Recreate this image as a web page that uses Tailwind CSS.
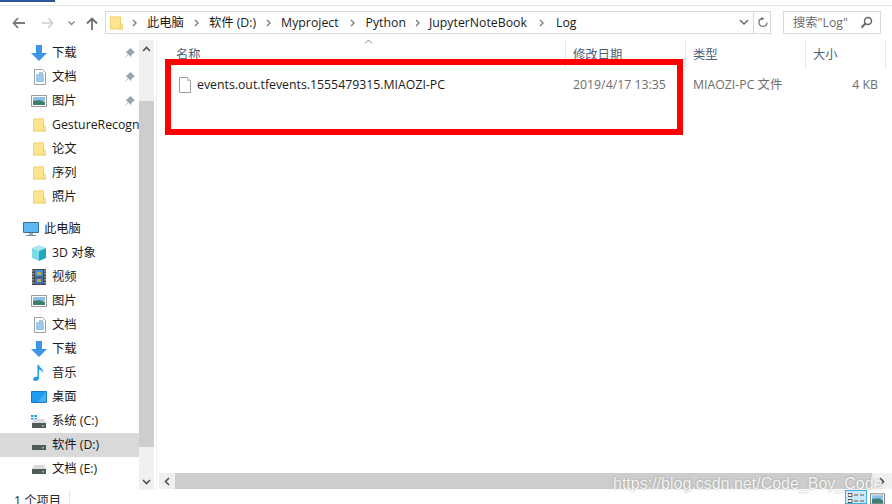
<!DOCTYPE html>
<html><head><meta charset="utf-8">
<script src="https://cdn.jsdelivr.net/npm/@tailwindcss/browser@4"></script>
</head>
<body class="overflow-hidden bg-white">
<svg width="0" height="0" class="absolute">
<defs>
<symbol id="folder" viewBox="0 0 16 16"><path d="M.5.5h12.500v15H.5z" fill="#ffe48f" stroke="#eec95a"/><path d="M12.500 15.500v-6h3v6z" fill="#ffe9a8" stroke="#eec95a"/></symbol>
<symbol id="down" viewBox="0 0 16 16"><path d="M5 0h6v8h5l-8 8-8-8h5z" fill="#3f95e6"/></symbol>
<symbol id="doc" viewBox="0 0 14 16"><path d="M1.500.5h8l3 3v12h-11z" fill="#fff" stroke="#9aa0a6"/><path d="M6 4h4M3 6h8M3 8h8M3 10h8M3 12h8" stroke="#3f95d0"/></symbol>
<symbol id="pic" viewBox="0 0 16 12"><path d="M.5.500h15v11H.5z" fill="#fff" stroke="#9a9a9a"/><path d="M2 2h12v4H2z" fill="#8cc0ea"/><path d="M2 6c4-1 8-1 12 1v3H2z" fill="#3f7f72"/></symbol>
<symbol id="pin" viewBox="0 0 10 10"><path d="M5.500 0l4.500 4.500-1.500.5-2 2-.5 2L3.500 6.500.5 9.500 0 9.500l3-3.500L.5 3.500l2-.5 2-2z" fill="#9aa3ad"/></symbol>
<symbol id="drive" viewBox="0 0 14 9"><path d="M2 0h10l2 4H0z" fill="#d8dadb"/><path d="M0 4h14v5H0z" fill="#53585c"/><path d="M10 6h2v1.500h-2z" fill="#5fe05f"/></symbol>
<symbol id="chev" viewBox="0 0 5 8"><path d="M1 1l3 3-3 3" fill="none" stroke="#777" stroke-width="1.300"/></symbol>
</defs>
</svg>

<div class="relative flex h-[504px] w-[892px] flex-col overflow-hidden font-['Open_Sans','Noto_Sans_CJK_SC',sans-serif] text-[12.3px] leading-[16px] text-[#1a1a1a]">
  <div class="h-[2px] w-[55px] shrink-0 bg-[#2b5797]"></div>
  <div class="mt-[3px] h-px shrink-0 bg-[#e3e3e3]"></div>

  <div class="flex h-[34px] shrink-0 items-center pl-[12px]">
    <svg width="13" height="12" viewBox="0 0 13 12" class="mr-[17px] shrink-0"><path d="M6 1L1.500 6 6 11M2 6h11" fill="none" stroke="#7a7a7a" stroke-width="1.800"/></svg>
    <svg width="12" height="12" viewBox="0 0 13 12" class="mr-[14px] shrink-0"><path d="M7 1l4.500 5L7 11M11 6H0" fill="none" stroke="#cfcfcf" stroke-width="1.800"/></svg>
    <svg width="7" height="5" viewBox="0 0 7 5" class="mr-[11px] shrink-0"><path d="M.5.500l3 3 3-3" fill="none" stroke="#8a8a8a" stroke-width="1.400"/></svg>
    <svg width="12" height="13" viewBox="0 0 12 13" class="mr-[7px] shrink-0"><path d="M1 6.500l5-5 5 5M6 2v11" fill="none" stroke="#6e6e6e" stroke-width="1.800"/></svg>
    <div class="mb-[1px] flex h-[23px] w-[666px] shrink-0 items-center border border-[#d9d9d9] pl-[4px]">
      <svg width="13" height="16" class="mr-[9px] shrink-0"><use href="#folder"/></svg>
      <svg width="5" height="8" class="mr-[10px] shrink-0"><use href="#chev"/></svg>
      <span>此电脑</span>
      <svg width="5" height="8" class="mx-[10px] shrink-0"><use href="#chev"/></svg>
      <span>软件 (D:)</span>
      <svg width="5" height="8" class="mx-[10px] shrink-0"><use href="#chev"/></svg>
      <span>Myproject</span>
      <svg width="5" height="8" class="mx-[11px] shrink-0"><use href="#chev"/></svg>
      <span>Python</span>
      <svg width="5" height="8" class="mx-[9px] shrink-0"><use href="#chev"/></svg>
      <span>JupyterNoteBook</span>
      <svg width="5" height="8" class="mx-[12px] shrink-0"><use href="#chev"/></svg>
      <span>Log</span>
      <div class="ml-auto flex h-full w-[18px] items-center justify-center">
        <svg width="10" height="7" viewBox="0 0 10 7"><path d="M1 1l4 4 4-4" fill="none" stroke="#666" stroke-width="1.500"/></svg>
      </div>
      <div class="flex h-full w-[17px] items-center justify-center border-l border-[#d9d9d9]">
        <svg width="11" height="12" viewBox="0 0 11 12"><path d="M6 1.500h-1a4 4 0 1 0 5 4" fill="none" stroke="#777" stroke-width="1.300"/><path d="M4.500 0l3 1.700-3 1.700z" fill="#777"/></svg>
      </div>
    </div>
    <div class="mb-[1px] ml-[12px] flex h-[23px] w-[98px] shrink-0 items-center justify-between border border-[#d9d9d9] pl-[9px] pr-[7px] text-[#6d6d6d]">
      <span>搜索"Log"</span>
      <svg width="13" height="13" viewBox="0 0 13 13"><circle cx="8" cy="5" r="3.500" fill="none" stroke="#666" stroke-width="1.500"/><path d="M5.500 7.500L1.500 11.500" stroke="#666" stroke-width="2"/></svg>
    </div>
  </div>

  <div class="flex min-h-0 flex-1">
    <div class="flex w-[139px] shrink-0 flex-col pt-[1px]">
      <div class="flex h-[24px] items-center pl-[31px]"><svg width="16" height="16" class="mr-[5px] shrink-0"><use href="#down"/></svg><span>下载</span><svg width="10" height="10" class="ml-auto mr-[4px]"><use href="#pin"/></svg></div>
      <div class="flex h-[24px] items-center pl-[33px]"><svg width="14" height="16" class="mr-[5px] shrink-0"><use href="#doc"/></svg><span>文档</span><svg width="10" height="10" class="ml-auto mr-[4px]"><use href="#pin"/></svg></div>
      <div class="flex h-[24px] items-center pl-[31px]"><svg width="16" height="12" class="mr-[5px] shrink-0"><use href="#pic"/></svg><span>图片</span><svg width="10" height="10" class="ml-auto mr-[4px]"><use href="#pin"/></svg></div>
      <div class="flex h-[24px] items-center pl-[33px]"><svg width="13" height="16" class="mr-[6px] shrink-0"><use href="#folder"/></svg><span class="overflow-hidden whitespace-nowrap">GestureRecogni</span></div>
      <div class="flex h-[24px] items-center pl-[33px]"><svg width="13" height="16" class="mr-[6px] shrink-0"><use href="#folder"/></svg><span>论文</span></div>
      <div class="flex h-[24px] items-center pl-[33px]"><svg width="13" height="16" class="mr-[6px] shrink-0"><use href="#folder"/></svg><span>序列</span></div>
      <div class="flex h-[24px] items-center pl-[33px]"><svg width="13" height="16" class="mr-[6px] shrink-0"><use href="#folder"/></svg><span>照片</span></div>
      <div class="mt-[8px] flex h-[24px] items-center pl-[23px]">
        <svg width="16" height="15" viewBox="0 0 16 15" class="mr-[5px] shrink-0"><path d="M.5.500h15v10H.5z" fill="#5cb8f5" stroke="#3d6f96"/><path d="M6 11h4v2H6z" fill="#9ab0c0"/><path d="M3 13.500h10" stroke="#6f8ca3"/></svg><span>此电脑</span>
      </div>
      <div class="flex h-[24px] items-center pl-[31px]">
        <svg width="16" height="16" viewBox="0 0 16 16" class="mr-[5px] shrink-0"><path d="M8 0l7 3-7 3-7-3z" fill="#a9e8f2"/><path d="M1 3l7 3v10l-7-3z" fill="#7ddbe6"/><path d="M15 3L8 6v10l7-3z" fill="#1fa8c4"/></svg><span>3D 对象</span>
      </div>
      <div class="flex h-[24px] items-center pl-[32px]">
        <svg width="14" height="16" viewBox="0 0 14 16" class="mr-[6px] shrink-0"><path d="M0 0h14v16H0z" fill="#4a4a4a"/><path d="M3 1h8v6.500H3z" fill="#3f8fe0"/><path d="M3 8.500h8V15H3z" fill="#3f6fc0"/><path d="M5 3h4v3H5zM5 10h4v3H5z" fill="#b9b040"/><path d="M1 1v14M13 1v14" stroke="#ddd" stroke-dasharray="1.500 1.500"/></svg><span>视频</span>
      </div>
      <div class="flex h-[24px] items-center pl-[31px]"><svg width="16" height="12" class="mr-[5px] shrink-0"><use href="#pic"/></svg><span>图片</span></div>
      <div class="flex h-[24px] items-center pl-[33px]"><svg width="14" height="16" class="mr-[5px] shrink-0"><use href="#doc"/></svg><span>文档</span></div>
      <div class="flex h-[24px] items-center pl-[31px]"><svg width="16" height="16" class="mr-[5px] shrink-0"><use href="#down"/></svg><span>下载</span></div>
      <div class="flex h-[24px] items-center pl-[33px]">
        <svg width="12" height="16" viewBox="0 0 12 16" class="mr-[7px] shrink-0"><path d="M4.500 0h1.500c.5 3 5 4 4 8-.5-2-2-3-4-3.500V13c0 2-2 3-4 3s-2.500-2-1-3.500c1-1 2.500-1 3.500-.5z" fill="#1e9be8"/></svg><span>音乐</span>
      </div>
      <div class="flex h-[24px] items-center pl-[31px]">
        <svg width="16" height="12" viewBox="0 0 16 12" class="mr-[5px] shrink-0"><path d="M.5.500h15v11H.5z" fill="#1f9bf0" stroke="#1877c0"/><path d="M15 1L7 11h8z" fill="#4ab0f5"/></svg><span>桌面</span>
      </div>
      <div class="flex h-[24px] items-center pl-[31px]">
        <svg width="16" height="13" viewBox="0 0 16 13" class="mr-[5px] shrink-0"><path d="M0 0h2.500v2H0zM3.500 0H6v2H3.500zM0 3h2.500v1.500H0zM3.500 3H6v1.500H3.500z" fill="#1e9be8"/><path d="M3 4h10l2 4H1z" fill="#d8dadb"/><path d="M1 8h14v5H1z" fill="#53585c"/><path d="M11 10h2v1.500h-2z" fill="#5fe05f"/></svg><span>系统 (C:)</span>
      </div>
      <div class="flex h-[24px] items-center bg-[#d9d9d9] pl-[32px]"><svg width="14" height="9" class="mr-[6px] shrink-0"><use href="#drive"/></svg><span>软件 (D:)</span></div>
      <div class="flex h-[24px] items-center pl-[32px]"><svg width="14" height="9" class="mr-[6px] shrink-0"><use href="#drive"/></svg><span>文档 (E:)</span></div>
    </div>

    <div class="flex w-[15px] shrink-0 flex-col bg-[#f0f0f0]">
      <div class="flex h-[17px] shrink-0 items-center justify-center"><svg width="9" height="6" viewBox="0 0 9 6"><path d="M1 5l3.500-3.500L8 5" fill="none" stroke="#505050" stroke-width="1.600"/></svg></div>
      <div class="mt-[44px] h-[346px] shrink-0 bg-[#cdcdcd]"></div>
      <div class="mt-auto flex h-[17px] shrink-0 items-center justify-center"><svg width="9" height="6" viewBox="0 0 9 6"><path d="M1 1l3.500 3.500L8 1" fill="none" stroke="#505050" stroke-width="1.600"/></svg></div>
    </div>
    <div class="w-[3px] shrink-0 border-r border-[#f0f0f0]"></div>

    <div class="flex min-w-0 flex-1 flex-col">
      <div class="relative flex h-[28px] shrink-0 items-center pt-[1px] text-[#4c607a]">
        <div class="flex h-full w-[409px] items-center border-r border-[#e5e5e5] pl-[19px]"><span>名称</span></div>
        <div class="flex h-full w-[120px] items-center border-r border-[#e5e5e5] pl-[7px]"><span>修改日期</span></div>
        <div class="flex h-full w-[120px] items-center border-r border-[#e5e5e5] pl-[7px]"><span>类型</span></div>
        <div class="flex h-full w-[80px] items-center border-r border-[#e5e5e5] pl-[7px]"><span>大小</span></div>
        <svg width="9" height="5" viewBox="0 0 9 5" class="absolute left-[207px] top-[-1px]"><path d="M1 4.500L4.500 1 8 4.500" fill="none" stroke="#8a8a8a"/></svg>
      </div>
      <div class="mt-[5px] flex h-[24px] shrink-0 items-center">
        <div class="flex w-[409px] items-center pl-[22px]">
          <svg width="12" height="16" viewBox="0 0 12 16" class="mr-[6px] shrink-0"><path d="M.5.500h8l3 3v12H.5z" fill="#fff" stroke="#9c9c9c"/><path d="M8.500.500v3h3" fill="#eee" stroke="#bbb"/></svg>
          <span class="whitespace-nowrap">events.out.tfevents.1555479315.MIAOZI-PC</span>
        </div>
        <div class="w-[120px] whitespace-nowrap pl-[7px] text-[#6d6d6d]">2019/4/17 13:35</div>
        <div class="w-[115px] whitespace-nowrap pl-[7px] text-[#6d6d6d]">MIAOZI-PC 文件</div>
        <div class="w-[77px] text-right text-[#6d6d6d]">4 KB</div>
      </div>
      <div class="min-h-0 flex-1"></div>
      <div class="mb-[1px] ml-[2px] flex h-[16px] shrink-0 bg-[#f0f0f0]">
        <div class="flex w-[16px] shrink-0 items-center justify-center"><svg width="6" height="9" viewBox="0 0 6 9"><path d="M5 1L1.500 4.500 5 8" fill="none" stroke="#505050" stroke-width="1.600"/></svg></div>
        <div class="min-w-0 flex-1 bg-[#cdcdcd]"></div>
        <div class="flex w-[20px] shrink-0 items-center justify-center"><svg width="6" height="9" viewBox="0 0 6 9"><path d="M1 1l3.500 3.500L1 8" fill="none" stroke="#505050" stroke-width="1.600"/></svg></div>
      </div>
    </div>
  </div>

  <div class="flex h-[14px] shrink-0 items-start pl-[14px] text-[#1f2a36]">
    <div class="flex h-[14px] w-[56px] items-start border-r border-[#e5e5e5] pt-[3px]"><span class="whitespace-nowrap">1 个项目</span></div>
    <div class="ml-auto flex h-full items-start">
      <div class="flex h-[14px] w-[22px] items-start justify-center border border-[#3eb0e8] bg-[#cfe8f7] pt-[2px]">
        <svg width="16" height="11" viewBox="0 0 16 11"><path d="M0 .5h4v3H0zM0 6.500h4v3H0z" fill="#fff" stroke="#555"/><path d="M6 2h4M12 2h4M6 8h4M12 8h4" stroke="#555"/></svg>
      </div>
      <div class="ml-[3px] mr-[7px] mt-[3px]">
        <svg width="15" height="12" viewBox="0 0 16 12"><path d="M.5.500h15v11H.5z" fill="#fff" stroke="#777"/><path d="M2 2h12v4H2z" fill="#8cc0ea"/><path d="M2 6c4-1 8-1 12 1v4H2z" fill="#3f7f72"/></svg>
      </div>
    </div>
  </div>

  <div class="absolute left-[165px] top-[59px] h-[76px] w-[518px] border-[6px] border-[#ff0000]"></div>
  <div class="absolute left-[613px] top-[474px] whitespace-nowrap font-['Liberation_Sans',sans-serif] text-[16px] leading-[20px] text-white/90 [text-shadow:0_0_2px_rgba(110,110,110,0.7)]">https://blog.csdn.net/Code_Boy_Code</div>
</div>
</body></html>
